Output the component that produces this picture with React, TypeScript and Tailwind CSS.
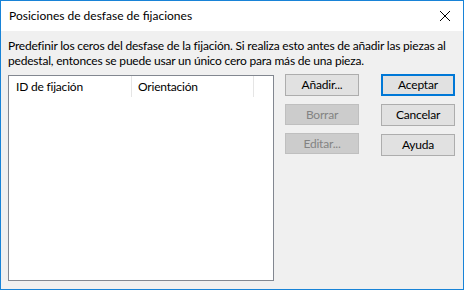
import React from 'react';

const font = { fontFamily: 'Lato, "Noto Sans", sans-serif' };

interface BtnProps {
  label: string;
  disabled?: boolean;
  primary?: boolean;
}

const DlgButton: React.FC<BtnProps> = ({ label, disabled, primary }) => {
  if (disabled) {
    return (
      <div className="w-[74px] h-[21px] flex items-center justify-center border border-[#bfbfbf] bg-[#cccccc] text-[#838383] text-[12px]">
        {label}
      </div>
    );
  }
  return (
    <div
      className={
        primary
          ? 'w-[74px] h-[22px] flex items-center justify-center border-2 border-[#0078d7] bg-[#e1e1e1] text-black text-[12px]'
          : 'w-[74px] h-[22px] flex items-center justify-center border border-[#adadad] bg-[#e1e1e1] text-black text-[12px]'
      }
    >
      {label}
    </div>
  );
};

const App: React.FC = () => {
  return (
    <div
      className="w-[464px] h-[290px] border border-[#1883d7] bg-[#f0f0f0] flex flex-col tracking-[-0.2px]"
      style={font}
    >
      <div className="h-[30px] bg-white flex items-center justify-between pl-[8px] pr-[9px] shrink-0">
        <span className="text-[12px] text-black tracking-normal">Posiciones de desfase de fijaciones</span>
        <svg width="12" height="12" viewBox="0 0 12 12" className="mr-[3px]">
          <path d="M1 1 L11 11 M11 1 L1 11" stroke="#000" strokeWidth="1" />
        </svg>
      </div>
      <div className="pl-[7px] pt-[7px] flex flex-col">
        <p className="text-[12px] leading-[15px] text-black whitespace-nowrap">
          Predefinir los ceros del desfase de la fijación. Si realiza esto antes de añadir las piezas al
          <br />
          pedestal, entonces se puede usar un único cero para más de una pieza.
        </p>
        <div className="flex items-start mt-[7px]">
          <div className="w-[266px] h-[206px] border border-[#828790] bg-white">
            <div className="flex h-[21px] text-[12px] text-black">
              <div className="w-[123px] border-r border-[#e5e5e5] pl-[7px] flex items-center">ID de fijación</div>
              <div className="w-[122px] border-r border-[#e5e5e5] pl-[6px] flex items-center">Orientación</div>
            </div>
          </div>
          <div className="flex flex-col gap-[8px] -mt-[1px] ml-[11px]">
            <DlgButton label="Añadir..." />
            <DlgButton label="Borrar" disabled />
            <DlgButton label="Editar..." disabled />
          </div>
          <div className="flex flex-col gap-[8px] -mt-[1px] ml-[22px]">
            <DlgButton label="Aceptar" primary />
            <DlgButton label="Cancelar" />
            <DlgButton label="Ayuda" />
          </div>
        </div>
      </div>
    </div>
  );
};

export default App;
